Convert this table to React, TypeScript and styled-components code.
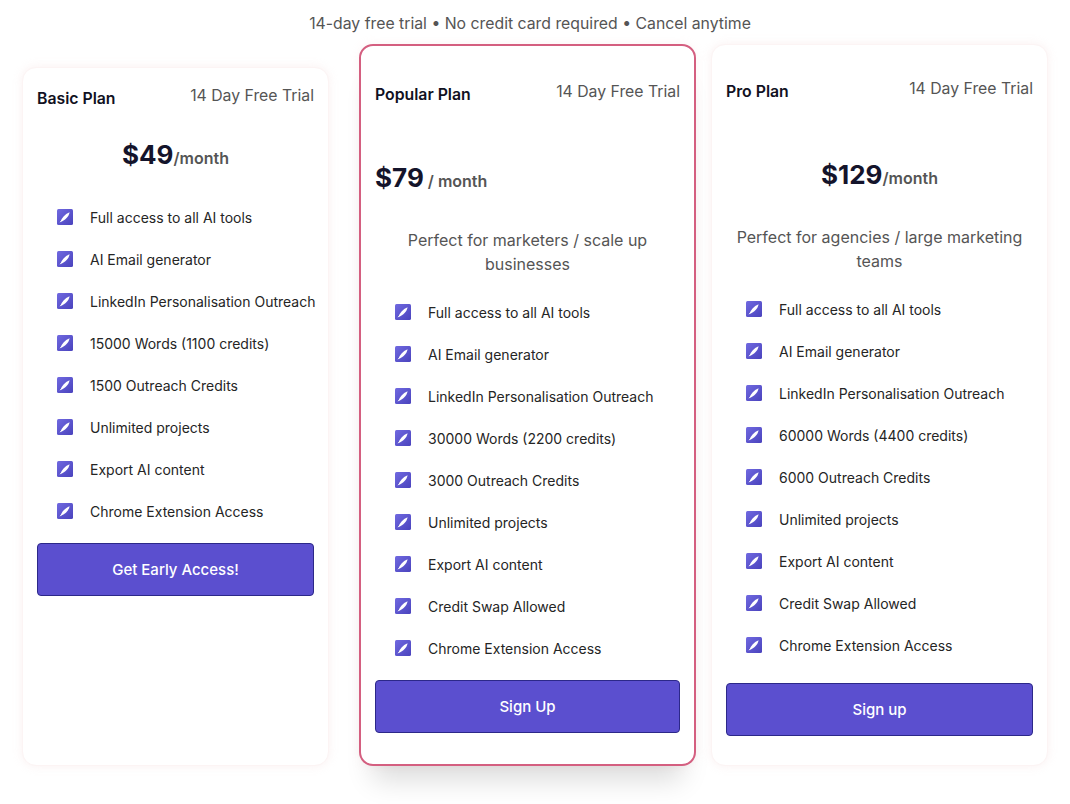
import React from "react";
import styled, { createGlobalStyle } from "styled-components";

const GlobalStyle = createGlobalStyle`
  body {
    margin: 0;
    background: #ffffff;
    font-family: "Inter", "Noto Sans", sans-serif;
    -webkit-font-smoothing: antialiased;
  }
`;

const Page = styled.div`
  width: 1070px;
  height: 804px;
  overflow: hidden;
  background: #fff;
`;

const Tagline = styled.p`
  margin: 13px 0 0;
  text-align: center;
  font-size: 15.8px;
  line-height: 22px;
  color: #555;
  padding-right: 10px;
`;

const CardRow = styled.div`
  display: flex;
  align-items: stretch;
  height: 722px;
  margin-top: 9px;
  padding-left: 22px;
`;

const Card = styled.div<{ $width: number; $offsetX: number; $offsetY: number; $highlight?: boolean }>`
  box-sizing: border-box;
  width: ${(p) => p.$width}px;
  margin-left: ${(p) => p.$offsetX}px;
  margin-top: ${(p) => p.$offsetY}px;
  display: flex;
  flex-direction: column;
  padding: 0 14px;
  border-radius: 14px;
  background: #fff;
  border: ${(p) => (p.$highlight ? "2px solid #d45f80" : "1px solid #fcf4f4")};
  box-shadow: ${(p) =>
    p.$highlight
      ? "0 28px 26px -14px rgba(0, 0, 0, 0.14), 0 0 10px rgba(240, 200, 200, 0.2)"
      : "0 0 10px rgba(240, 205, 205, 0.3)"};
`;

const Header = styled.div<{ $top: number }>`
  display: flex;
  justify-content: space-between;
  align-items: flex-start;
  margin-top: ${(p) => p.$top}px;
`;

const PlanName = styled.h3`
  margin: 0;
  padding-top: 3px;
  font-size: 15.8px;
  line-height: 24px;
  font-weight: 600;
  color: #111122;
`;

const Trial = styled.span`
  font-size: 15.8px;
  line-height: 24px;
  color: #555;
`;

const Price = styled.div<{ $top: number; $align: "left" | "center" }>`
  margin-top: ${(p) => p.$top}px;
  text-align: ${(p) => p.$align};
  line-height: 40px;
  height: 40px;
`;

const Amount = styled.span`
  font-size: 26px;
  font-weight: 700;
  color: #14142b;
`;

const Per = styled.span`
  font-size: 16px;
  font-weight: 600;
  color: #555;
`;

const Description = styled.p`
  margin: 30px 0 0;
  padding: 0 10px;
  text-align: center;
  font-size: 16px;
  line-height: 24px;
  color: #555;
`;

const Features = styled.ul<{ $top: number }>`
  list-style: none;
  margin: ${(p) => p.$top}px 0 0;
  padding: 0 0 0 20px;
`;

const Feature = styled.li`
  display: flex;
  align-items: center;
  gap: 17px;
  height: 42px;
  font-size: 14px;
  color: #252525;
  white-space: nowrap;
`;

const Button = styled.button<{ $top: number }>`
  margin-top: ${(p) => p.$top}px;
  height: 53px;
  width: 100%;
  background: #5b4fcf;
  border: 1px solid #2c2889;
  border-radius: 4px;
  color: #fff;
  font-family: "Inter", sans-serif;
  font-size: 15px;
  font-weight: 500;
  cursor: pointer;
`;

const CheckIcon = () => (
  <svg width="16" height="16" viewBox="0 0 16 16" style={{ flexShrink: 0 }}>
    <defs>
      <linearGradient id="ck" x1="0" y1="0" x2="1" y2="1">
        <stop offset="0" stopColor="#7069e0" />
        <stop offset="1" stopColor="#4a43bd" />
      </linearGradient>
    </defs>
    <rect x="0" y="0" width="16" height="16" rx="1.5" fill="url(#ck)" />
    <path d="M3.5 12.8 C4.6 9 7.6 5.3 12.6 3.2 C11.8 7.6 8.4 11.2 3.5 12.8 Z" fill="#fff" />
    <path d="M3.2 13.2 L5.2 11" stroke="#fff" strokeWidth="1" />
  </svg>
);

type Plan = {
  name: string;
  amount: string;
  per: string;
  description?: string;
  features: string[];
  cta: string;
};

const basic: Plan = {
  name: "Basic Plan",
  amount: "$49",
  per: "/month",
  features: [
    "Full access to all AI tools",
    "AI Email generator",
    "LinkedIn Personalisation Outreach",
    "15000 Words (1100 credits)",
    "1500 Outreach Credits",
    "Unlimited projects",
    "Export AI content",
    "Chrome Extension Access",
  ],
  cta: "Get Early Access!",
};

const popular: Plan = {
  name: "Popular Plan",
  amount: "$79",
  per: " / month",
  description: "Perfect for marketers / scale up businesses",
  features: [
    "Full access to all AI tools",
    "AI Email generator",
    "LinkedIn Personalisation Outreach",
    "30000 Words (2200 credits)",
    "3000 Outreach Credits",
    "Unlimited projects",
    "Export AI content",
    "Credit Swap Allowed",
    "Chrome Extension Access",
  ],
  cta: "Sign Up",
};

const pro: Plan = {
  name: "Pro Plan",
  amount: "$129",
  per: "/month",
  description: "Perfect for agencies / large marketing teams",
  features: [
    "Full access to all AI tools",
    "AI Email generator",
    "LinkedIn Personalisation Outreach",
    "60000 Words (4400 credits)",
    "6000 Outreach Credits",
    "Unlimited projects",
    "Export AI content",
    "Credit Swap Allowed",
    "Chrome Extension Access",
  ],
  cta: "Sign up",
};

type CardProps = {
  plan: Plan;
  width: number;
  offsetX: number;
  offsetY: number;
  highlight?: boolean;
  headerTop: number;
  priceTop: number;
  priceAlign: "left" | "center";
  featuresTop: number;
  buttonTop: number;
};

const PlanCard: React.FC<CardProps> = (p) => (
  <Card $width={p.width} $offsetX={p.offsetX} $offsetY={p.offsetY} $highlight={p.highlight}>
    <Header $top={p.headerTop}>
      <PlanName>{p.plan.name}</PlanName>
      <Trial>14 Day Free Trial</Trial>
    </Header>
    <Price $top={p.priceTop} $align={p.priceAlign}>
      <Amount>{p.plan.amount}</Amount>
      <Per>{p.plan.per}</Per>
    </Price>
    {p.plan.description && <Description>{p.plan.description}</Description>}
    <Features $top={p.featuresTop}>
      {p.plan.features.map((f) => (
        <Feature key={f}>
          <CheckIcon />
          <span>{f}</span>
        </Feature>
      ))}
    </Features>
    <Button $top={p.buttonTop}>{p.plan.cta}</Button>
  </Card>
);

export default function App() {
  return (
    <Page>
      <GlobalStyle />
      <Tagline>14-day free trial • No credit card required • Cancel anytime</Tagline>
      <CardRow>
        <PlanCard
          plan={basic}
          width={307}
          offsetX={0}
          offsetY={23}
          headerTop={16}
          priceTop={24}
          priceAlign="center"
          featuresTop={21}
          buttonTop={11}
        />
        <PlanCard
          plan={popular}
          width={337}
          offsetX={30}
          offsetY={0}
          highlight
          headerTop={34}
          priceTop={51}
          priceAlign="left"
          featuresTop={15}
          buttonTop={11}
        />
        <PlanCard
          plan={pro}
          width={337}
          offsetX={15}
          offsetY={0}
          headerTop={32}
          priceTop={51}
          priceAlign="center"
          featuresTop={15}
          buttonTop={17}
        />
      </CardRow>
    </Page>
  );
}
